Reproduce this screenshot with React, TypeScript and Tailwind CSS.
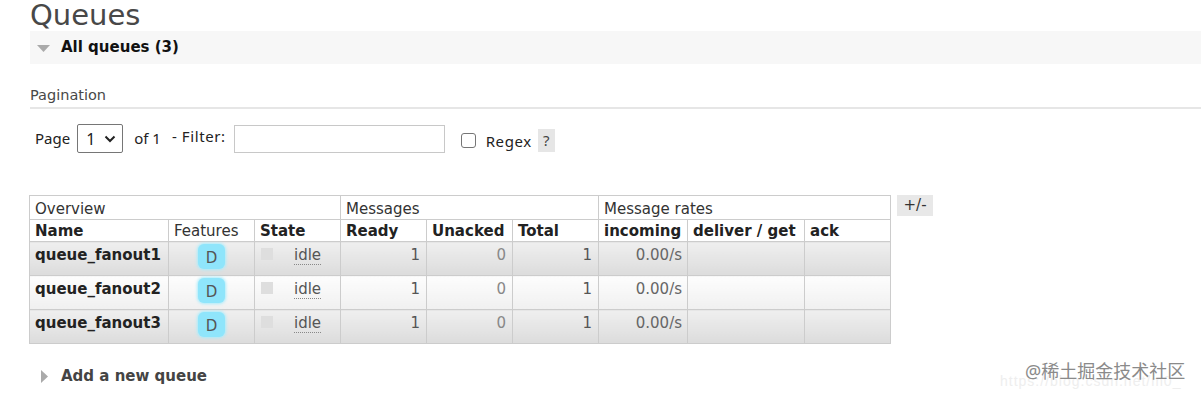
import React from "react";

const rows = ["queue_fanout1", "queue_fanout2", "queue_fanout3"];

function DataRow({ name, alt }: { name: string; alt: boolean }) {
  const bg = alt
    ? "bg-gradient-to-b from-[#fdfdfd] to-[#f0f0f0]"
    : "bg-gradient-to-b from-[#efefef] to-[#dcdcdc]";
  const td = `border border-[#cccccc] h-[34px] align-top pt-[2px] ${bg}`;
  return (
    <tr>
      <td className={`${td} pl-[5px] font-bold text-[#222]`}>{name}</td>
      <td className={`${td} text-center`}>
        <span className="inline-block w-[27px] h-[25px] mt-[0px] rounded-[6px] bg-[#8fe5fb] shadow-[0_0_3px_1px_#a8ecfc] text-[#555] leading-[29px]">
          D
        </span>
      </td>
      <td className={`${td} pl-[6px]`}>
        <div className="flex items-start">
          <span className="inline-block w-[12px] h-[12px] bg-[#dedede] mt-[4px]" />
          <span className="ml-[21px] mt-[3px] text-[#555] border-b border-dotted border-[#888] leading-[17px]">
            idle
          </span>
        </div>
      </td>
      <td className={`${td} text-right pr-[6px] text-[#555]`}>1</td>
      <td className={`${td} text-right pr-[6px] text-[#888]`}>0</td>
      <td className={`${td} text-right pr-[6px] text-[#555]`}>1</td>
      <td className={`${td} text-right pr-[5px] text-[#666]`}>0.00/s</td>
      <td className={td}></td>
      <td className={td}></td>
    </tr>
  );
}

export default function App() {
  const th = "border border-[#cccccc] text-left px-[5px] h-[22px] leading-[18px]";
  return (
    <div className="relative w-[1201px] h-[395px] overflow-hidden bg-white font-['DejaVu_Sans',sans-serif] text-[15px] text-[#222]">
      <h1 className="pl-[30px] h-[31px] text-[29px] leading-[29px] pt-[1px] font-normal text-[#484848]">
        Queues
      </h1>
      <div className="ml-[30px] h-[33px] bg-[#f7f7f7] flex items-center">
        <svg width="13" height="7" viewBox="0 0 13 7" className="ml-[7px] mt-[1px]">
          <polygon points="0,0 13,0 6.5,7" fill="#aaaaaa" />
        </svg>
        <span className="ml-[11px] font-bold text-[#111] text-[15px]">All queues (3)</span>
      </div>

      <div className="ml-[30px] mt-[23px] pb-[3px] border-b-2 border-[#e6e6e6] text-[14.5px] leading-[17px] text-[#484848]">
        Pagination
      </div>

      <div className="mt-[15px] ml-[35px] flex items-center h-[29px] font-['Noto_Sans',sans-serif] text-[15px] text-[#222]">
        <span>Page</span>
        <div className="ml-[7px] w-[46px] h-[29px] border border-[#767676] rounded-[2px] flex items-center pl-[8px]">
          <span className="text-[16px]">1</span>
          <svg width="12" height="8" viewBox="0 0 12 8" className="ml-[9px]">
            <path d="M1.5 1.5 L6 6 L10.5 1.5" stroke="#222" strokeWidth="2" fill="none" />
          </svg>
        </div>
        <span className="ml-[11px]">of 1</span>
        <span className="ml-[11px] mt-[-4px] tracking-[0.6px]">- Filter:</span>
        <div className="ml-[8px] w-[211px] h-[28px] border border-[#c8c8c8]" />
        <div className="ml-[16px] mt-[4px] w-[15px] h-[15px] border border-[#767676] rounded-[3px]" />
        <span className="ml-[10px] mt-[6px] tracking-[0.6px]">Regex</span>
        <span className="ml-[6px] mt-[4px] w-[17px] h-[23px] bg-[#e6e6e6] text-[#444] flex items-center justify-center text-[15px]">
          ?
        </span>
      </div>

      <div className="mt-[42px] ml-[29px] flex items-start">
        <table className="border-collapse table-fixed w-[861px] font-['DejaVu_Sans',sans-serif] text-[15px]">
          <colgroup>
            <col className="w-[139px]" />
            <col className="w-[86px]" />
            <col className="w-[86px]" />
            <col className="w-[86px]" />
            <col className="w-[86px]" />
            <col className="w-[86px]" />
            <col className="w-[89px]" />
            <col className="w-[117px]" />
            <col className="w-[86px]" />
          </colgroup>
          <thead>
            <tr>
              <th colSpan={3} className={`${th} h-[24px] font-normal text-[#333] pt-[2px]`}>
                Overview
              </th>
              <th colSpan={3} className={`${th} h-[24px] font-normal text-[#333] pt-[2px]`}>
                Messages
              </th>
              <th colSpan={3} className={`${th} h-[24px] font-normal text-[#333] pt-[2px]`}>
                Message rates
              </th>
            </tr>
            <tr>
              <th className={`${th} font-bold`}>Name</th>
              <th className={`${th} font-normal text-[#333]`}>Features</th>
              <th className={`${th} font-bold`}>State</th>
              <th className={`${th} font-bold`}>Ready</th>
              <th className={`${th} font-bold`}>Unacked</th>
              <th className={`${th} font-bold`}>Total</th>
              <th className={`${th} font-bold`}>incoming</th>
              <th className={`${th} font-bold`}>deliver / get</th>
              <th className={`${th} font-bold`}>ack</th>
            </tr>
          </thead>
          <tbody>
            {rows.map((r, i) => (
              <DataRow key={r} name={r} alt={i === 1} />
            ))}
          </tbody>
        </table>
        <div className="ml-[6px] w-[36px] h-[21px] bg-[#e8e8e8] flex items-center justify-center text-[15px] text-[#333]">
          +/-
        </div>
      </div>

      <div className="mt-[21px] ml-[41px] flex items-center">
        <svg width="7" height="13" viewBox="0 0 7 13">
          <polygon points="0,0 7,6.5 0,13" fill="#aaaaaa" />
        </svg>
        <span className="ml-[13px] font-bold text-[#444] text-[15px]">Add a new queue</span>
      </div>

      <div className="absolute left-[1000px] top-[371px] text-[14px] text-[#eeeeee] font-['Liberation_Sans',sans-serif] tracking-[1px]">
        https://blog.csdn.net/m0_
      </div>
      <div className="absolute left-[1025px] top-[358px] text-[18px] leading-[26px] text-[#8a8a8a] font-['Noto_Sans','Noto_Sans_CJK_SC',sans-serif] [text-shadow:0_0_2px_#fff]">
        @稀土掘金技术社区
      </div>
    </div>
  );
}
